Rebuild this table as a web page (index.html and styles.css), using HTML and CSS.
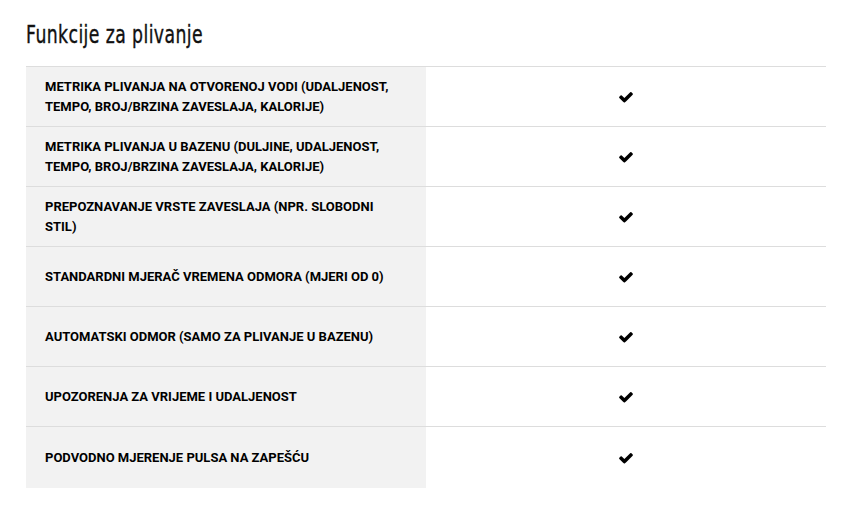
FILE: index.html
```html
<!DOCTYPE html>
<html>
<head>
<meta charset="utf-8">
<link rel="stylesheet" href="styles.css">
</head>
<body>
<div class="wrap">
  <h2 class="title"><span class="title-text">Funkcije za plivanje</span></h2>
  <div class="table">
    <div class="row"><div class="name">METRIKA PLIVANJA NA OTVORENOJ VODI (UDALJENOST, TEMPO, BROJ/BRZINA ZAVESLAJA, KALORIJE)</div><div class="val"><svg class="chk" viewBox="0 0 1792 1792"><path d="M1671 566q0 40-28 68l-724 724-136 136q-28 28-68 28t-68-28l-136-136-362-362q-28-28-28-68t28-68l136-136q28-28 68-28t68 28l294 295 656-657q28-28 68-28t68 28l136 136q28 28 28 68z"/></svg></div></div>
    <div class="row"><div class="name">METRIKA PLIVANJA U BAZENU (DULJINE, UDALJENOST, TEMPO, BROJ/BRZINA ZAVESLAJA, KALORIJE)</div><div class="val"><svg class="chk" viewBox="0 0 1792 1792"><path d="M1671 566q0 40-28 68l-724 724-136 136q-28 28-68 28t-68-28l-136-136-362-362q-28-28-28-68t28-68l136-136q28-28 68-28t68 28l294 295 656-657q28-28 68-28t68 28l136 136q28 28 28 68z"/></svg></div></div>
    <div class="row"><div class="name">PREPOZNAVANJE VRSTE ZAVESLAJA (NPR. SLOBODNI STIL)</div><div class="val"><svg class="chk" viewBox="0 0 1792 1792"><path d="M1671 566q0 40-28 68l-724 724-136 136q-28 28-68 28t-68-28l-136-136-362-362q-28-28-28-68t28-68l136-136q28-28 68-28t68 28l294 295 656-657q28-28 68-28t68 28l136 136q28 28 28 68z"/></svg></div></div>
    <div class="row"><div class="name">STANDARDNI MJERAČ VREMENA ODMORA (MJERI OD 0)</div><div class="val"><svg class="chk" viewBox="0 0 1792 1792"><path d="M1671 566q0 40-28 68l-724 724-136 136q-28 28-68 28t-68-28l-136-136-362-362q-28-28-28-68t28-68l136-136q28-28 68-28t68 28l294 295 656-657q28-28 68-28t68 28l136 136q28 28 28 68z"/></svg></div></div>
    <div class="row"><div class="name">AUTOMATSKI ODMOR (SAMO ZA PLIVANJE U BAZENU)</div><div class="val"><svg class="chk" viewBox="0 0 1792 1792"><path d="M1671 566q0 40-28 68l-724 724-136 136q-28 28-68 28t-68-28l-136-136-362-362q-28-28-28-68t28-68l136-136q28-28 68-28t68 28l294 295 656-657q28-28 68-28t68 28l136 136q28 28 28 68z"/></svg></div></div>
    <div class="row"><div class="name">UPOZORENJA ZA VRIJEME I UDALJENOST</div><div class="val"><svg class="chk" viewBox="0 0 1792 1792"><path d="M1671 566q0 40-28 68l-724 724-136 136q-28 28-68 28t-68-28l-136-136-362-362q-28-28-28-68t28-68l136-136q28-28 68-28t68 28l294 295 656-657q28-28 68-28t68 28l136 136q28 28 28 68z"/></svg></div></div>
    <div class="row last"><div class="name">PODVODNO MJERENJE PULSA NA ZAPEŠĆU</div><div class="val"><svg class="chk" viewBox="0 0 1792 1792"><path d="M1671 566q0 40-28 68l-724 724-136 136q-28 28-68 28t-68-28l-136-136-362-362q-28-28-28-68t28-68l136-136q28-28 68-28t68 28l294 295 656-657q28-28 68-28t68 28l136 136q28 28 28 68z"/></svg></div></div>
  </div>
</div>
</body>
</html>
```
FILE: styles.css
```css
html, body { margin: 0; padding: 0; background: #fff; }
.wrap { padding: 0 41px 0 26px; }
.title {
  margin: 0;
  height: 66px;
  padding-top: 20px;
  box-sizing: border-box;
  font-family: "DejaVu Sans", sans-serif;
  font-weight: normal;
  font-size: 25px;
  line-height: 30px;
  color: #111;
}
.title-text { display: inline-block; transform: scaleX(0.69); transform-origin: left center; letter-spacing: 0.6px; -webkit-text-stroke: 0.4px #111; }
.table { width: 800px; border-top: 1px solid #ddd; }
.row { display: grid; grid-template-columns: 400px 400px; height: 59px; border-bottom: 1px solid #ddd; }
.row.last { border-bottom: none; height: 61px; }
.name {
  background: #f2f2f2;
  padding: 1px 30px 0 19px;
  display: flex;
  align-items: center;
  font-family: Roboto, "Liberation Sans", sans-serif;
  font-weight: 700;
  font-size: 13px;
  line-height: 20px;
  color: #000;
}
.val { display: flex; align-items: center; justify-content: center; }
.chk { width: 16px; height: 16px; fill: #000; }
```
